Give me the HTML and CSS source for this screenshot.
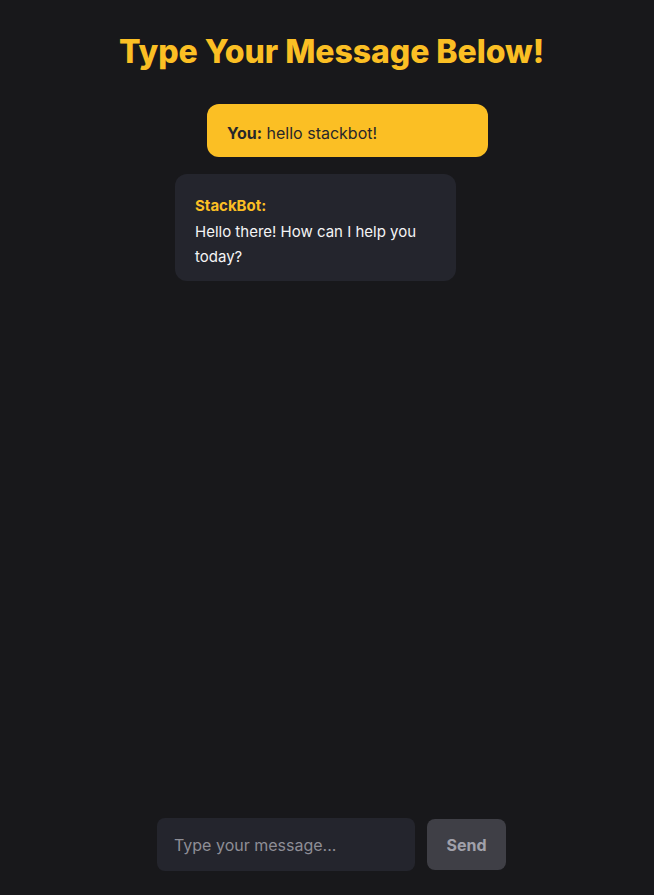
FILE: index.html
```html
<!DOCTYPE html>
<html lang="en">
<head>
<meta charset="utf-8">
<title>StackBot</title>
<link rel="stylesheet" href="styles.css">
</head>
<body>
<div class="app">
  <h1 class="title">Type Your Message Below!</h1>
  <div class="messages">
    <div class="bubble bubble-user"><strong>You:</strong> hello stackbot!</div>
    <div class="bubble bubble-bot"><span class="bot-name">StackBot:</span>Hello there! How can I help you today?</div>
  </div>
  <form class="composer">
    <input class="composer-input" type="text" placeholder="Type your message...">
    <button class="composer-send" type="button">Send</button>
  </form>
</div>
</body>
</html>
```
FILE: styles.css
```css
* { box-sizing: border-box; }
html, body {
  margin: 0;
  height: 100%;
  background: #18181b;
  font-family: Inter, "Noto Sans", sans-serif;
}
.app {
  min-height: 100vh;
  display: flex;
  flex-direction: column;
  align-items: center;
  padding: 33px 0 24px 9px;
}
.title {
  margin: 0;
  font-size: 32px;
  line-height: 38px;
  font-weight: 800;
  letter-spacing: -0.05px;
  color: #fbbf24;
}
.messages {
  flex: 1;
  width: 313px;
  display: flex;
  flex-direction: column;
  gap: 17px;
  margin-top: 33px;
}
.bubble {
  width: 281px;
  border-radius: 12px;
}
.bubble-user {
  align-self: flex-end;
  background: #fbbf24;
  color: #27272a;
  font-size: 16px;
  line-height: 24px;
  padding: 17px 20px 12px;
  min-height: 53px;
}
.bubble-user strong { font-weight: 700; }
.bubble-bot {
  align-self: flex-start;
  background: #24252d;
  color: #f4f4f5;
  font-size: 15px;
  line-height: 25.5px;
  padding: 19px 20px 11px;
  min-height: 106px;
}
.bot-name {
  display: block;
  color: #fbbf24;
  font-weight: 700;
}
.composer {
  display: flex;
  align-items: center;
  gap: 12px;
  margin: 0;
}
.composer-input {
  width: 258px;
  height: 53px;
  border: none;
  outline: none;
  border-radius: 8px;
  background: #24252d;
  color: #f4f4f5;
  padding: 0 17px;
  font-family: inherit;
  font-size: 16px;
}
.composer-input::placeholder { color: #8e8e96; }
.composer-send {
  width: 79px;
  height: 51px;
  border: none;
  border-radius: 8px;
  background: #3f3f46;
  color: #a1a1aa;
  font-family: inherit;
  font-size: 16px;
  font-weight: 700;
}
```
